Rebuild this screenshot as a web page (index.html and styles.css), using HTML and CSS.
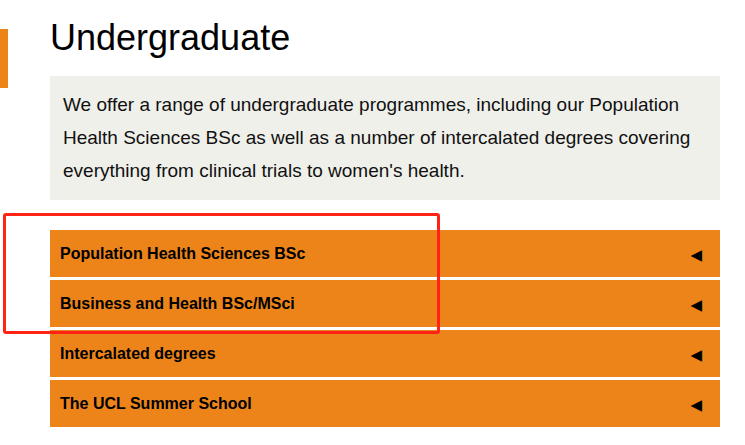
FILE: index.html
```html
<!DOCTYPE html>
<html>
<head>
    <meta charset="UTF-8">
    <title>Undergraduate</title>
    <link rel="stylesheet" href="styles.css">
</head>
<body>
    <div class="side-mark"></div>
    <div class="content">
        <h1 class="page-title">Undergraduate</h1>
        <div class="intro">
            We offer a range of undergraduate programmes, including our Population
            Health Sciences BSc as well as a number of intercalated degrees covering
            everything from clinical trials to women's health.
        </div>

        <div class="accordion">
            <div class="acc-item">
                <span>Population Health Sciences BSc</span>
                <span class="arrow">&#9664;</span>
            </div>
            <div class="acc-item">
                <span>Business and Health BSc/MSci</span>
                <span class="arrow">&#9664;</span>
            </div>
            <div class="acc-item">
                <span>Intercalated degrees</span>
                <span class="arrow">&#9664;</span>
            </div>
            <div class="acc-item">
                <span>The UCL Summer School</span>
                <span class="arrow">&#9664;</span>
            </div>
        </div>
    </div>

    <div class="highlight"></div>
</body>
</html>
```

FILE: styles.css
```css
body {
    margin: 0;
    padding: 0;
    background-color: #ffffff;
    font-family: "Liberation Sans", Arial, sans-serif;
    color: #000000;
    position: relative;
}

.side-mark {
    position: absolute;
    left: 0;
    top: 29px;
    width: 8px;
    height: 59px;
    background-color: #ec841a;
}

.content {
    width: 670px;
    margin-left: 50px;
    padding-top: 14px;
}

.page-title {
    font-size: 36px;
    font-weight: normal;
    margin: 0;
    line-height: 48px;
}

.intro {
    background-color: #f0f0eb;
    margin-top: 14px;
    padding: 12px 13px 13px 13px;
    font-size: 19px;
    line-height: 33px;
    color: #111111;
}

.accordion {
    margin-top: 30px;
    display: flex;
    flex-direction: column;
    gap: 3px;
}

.acc-item {
    background-color: #ec841a;
    height: 47px;
    padding: 0 18px 0 10px;
    display: flex;
    align-items: center;
    justify-content: space-between;
    font-size: 16px;
    font-weight: bold;
}

.arrow {
    font-family: "DejaVu Sans", sans-serif;
    font-size: 15px;
    font-weight: normal;
    padding-top: 3px;
}

.highlight {
    position: absolute;
    left: 3px;
    top: 213px;
    width: 431px;
    height: 115px;
    border: 3px solid #ff2316;
    border-radius: 3px;
}
```
